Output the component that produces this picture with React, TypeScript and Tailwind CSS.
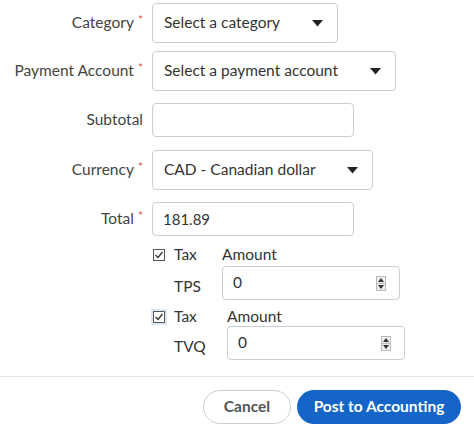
const font = { fontFamily: 'Lato, "Noto Sans", sans-serif' }

function Label({ text, required }: { text: string; required?: boolean }) {
  return (
    <div className="w-[143px] shrink-0 text-right text-[15.5px] text-[#444]">
      {text}
      {required && <span className="ml-[4px] text-[#d9534f] text-[12px] align-top">*</span>}
    </div>
  )
}

function Select({ value, width }: { value: string; width: string }) {
  return (
    <div
      className={`${width} h-[40px] rounded-[4px] border border-[#c9ccd1] bg-white flex items-center justify-between pl-[11px] pr-[14px] text-[15.5px] text-[#333]`}
    >
      <span>{value}</span>
      <svg width="11" height="7" viewBox="0 0 11 7">
        <path d="M0 0 L11 0 L5.5 6.5 Z" fill="#222" />
      </svg>
    </div>
  )
}

function TextInput({ value = '' }: { value?: string }) {
  return (
    <div className="w-[202px] h-[34px] rounded-[4px] border border-[#c9ccd1] bg-white flex items-center pl-[10px] text-[15px] text-[#333]">
      {value}
    </div>
  )
}

function Check({ focused }: { focused?: boolean }) {
  return (
    <span
      className={`inline-flex items-center justify-center w-[16px] h-[16px] ${focused ? 'bg-[#dce6f4]' : ''}`}
    >
      <svg width="12" height="12" viewBox="0 0 12 12">
        <rect x="0.5" y="0.5" width="11" height="11" fill="white" stroke="#555" />
        <path d="M2.5 6 L5 8.5 L9.5 3" fill="none" stroke="#333" strokeWidth="1.3" />
      </svg>
    </span>
  )
}

function Spinner() {
  return (
    <span className="flex flex-col w-[10px] h-[15px] border border-[#bbb] bg-[#eee]">
      <span className="flex-1 flex items-center justify-center border-b border-[#bbb]">
        <svg width="6" height="4" viewBox="0 0 6 4"><path d="M0 4 L3 0 L6 4 Z" fill="#333" /></svg>
      </span>
      <span className="flex-1 flex items-center justify-center">
        <svg width="6" height="4" viewBox="0 0 6 4"><path d="M0 0 L3 4 L6 0 Z" fill="#333" /></svg>
      </span>
    </span>
  )
}

function TaxBlock({
  code,
  focused,
  leftW,
  codeGap,
  inputGap,
}: {
  code: string
  focused?: boolean
  leftW: string
  codeGap: string
  inputGap: string
}) {
  return (
    <div className="flex pl-[151px] text-[15.5px] text-[#333]">
      <div className={`${leftW} shrink-0 flex flex-col`}>
        <div className="h-[18px] flex items-center gap-[7px]">
          <Check focused={focused} />
          <span>Tax</span>
        </div>
        <div className={`${codeGap} pl-[23px]`}>{code}</div>
      </div>
      <div className="flex flex-col">
        <div className="h-[16px] leading-[16px]">Amount</div>
        <div
          className={`${inputGap} w-[178px] h-[34px] rounded-[4px] border border-[#c9ccd1] bg-white flex items-center justify-between pl-[10px] pr-[13px]`}
        >
          <span>0</span>
          <Spinner />
        </div>
      </div>
    </div>
  )
}

export default function App() {
  return (
    <div className="w-[474px] h-[430px] bg-white flex flex-col" style={font}>
      <div className="flex flex-col pt-[3px]">
        <div className="flex items-center gap-[9px]">
          <Label text="Category" required />
          <Select value="Select a category" width="w-[186px]" />
        </div>
        <div className="flex items-center gap-[9px] mt-[8px]">
          <Label text="Payment Account" required />
          <Select value="Select a payment account" width="w-[244px]" />
        </div>
        <div className="flex items-center gap-[9px] mt-[12px]">
          <Label text="Subtotal" />
          <TextInput />
        </div>
        <div className="flex items-center gap-[9px] mt-[13px]">
          <Label text="Currency" required />
          <Select value="CAD - Canadian dollar" width="w-[221px]" />
        </div>
        <div className="flex items-center gap-[9px] mt-[12px]">
          <Label text="Total" required />
          <TextInput value="181.89" />
        </div>
        <div className="mt-[10px]">
          <TaxBlock code="TPS" leftW="w-[71px]" codeGap="mt-[11px]" inputGap="mt-[4px]" />
        </div>
        <div className="mt-[8px]">
          <TaxBlock code="TVQ" focused leftW="w-[76px]" codeGap="mt-[9px]" inputGap="mt-[2px]" />
        </div>
      </div>
      <div className="mt-auto border-t border-[#e2e4e8] flex justify-end items-center gap-[6px] pr-[13px] pt-[13px] pb-[6px]">
        <button className="w-[88px] h-[34px] rounded-full border border-[#c9ccd1] bg-white text-[15.5px] font-bold text-[#555]">
          Cancel
        </button>
        <button className="w-[164px] h-[34px] rounded-full bg-[#1565c8] text-[15.5px] font-bold text-white">
          Post to Accounting
        </button>
      </div>
    </div>
  )
}
